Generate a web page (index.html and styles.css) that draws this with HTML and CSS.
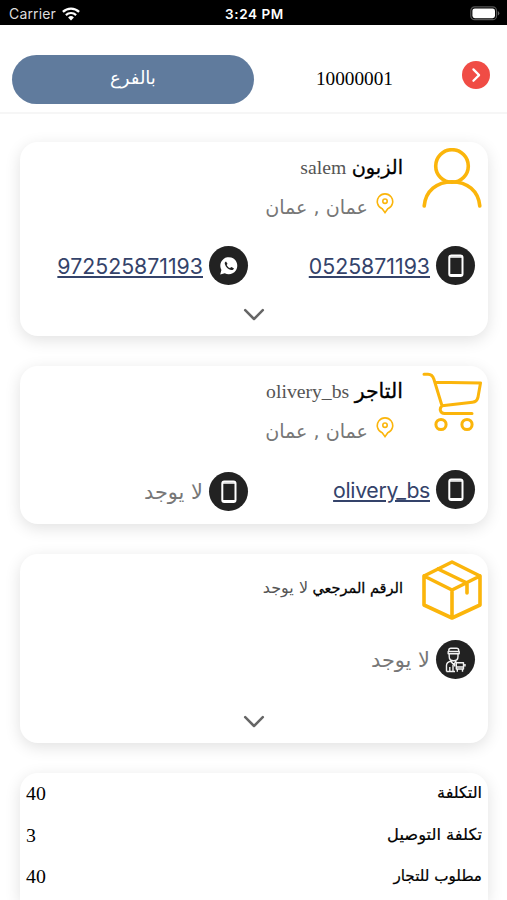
FILE: index.html
```html
<!DOCTYPE html>
<html lang="ar" dir="rtl">
<head>
<meta charset="utf-8">
<meta name="viewport" content="width=device-width, initial-scale=1">
<title>10000001</title>
<link rel="stylesheet" href="styles.css">
</head>
<body>
<svg class="defs" width="0" height="0" aria-hidden="true">
  <symbol id="pin" viewBox="0 0 18 22"><path d="M9 19.6 6.2 15.7a7.7 7.7 0 1 1 5.6 0Z"/><circle cx="9" cy="8.2" r="2.2"/></symbol>
  <symbol id="phone" viewBox="0 0 39 39"><rect x="13.3" y="9.5" width="13.2" height="20.6" rx="2" fill="none" stroke="#fff" stroke-width="2"/><path d="M13.5 11h12.7M13.5 28.6h12.7" stroke="#fff" stroke-width="1.4"/></symbol>
  <symbol id="chevron" viewBox="0 0 22 14"><path d="M2.2 2.2 11 11l8.8-8.8"/></symbol>
</svg>
<div class="status" dir="ltr">
  <div class="carrier"><span>Carrier</span>
    <svg width="18" height="14" viewBox="0 0 18 14" fill="none" stroke="#fff"><path d="M.9 4.9a11.7 11.7 0 0 1 16.2 0" stroke-width="2.3"/><path d="M3.9 8.1a7.3 7.3 0 0 1 10.2 0" stroke-width="2.2"/><path d="M9 13.4 6.1 10.4a4.2 4.2 0 0 1 5.8 0Z" fill="#fff" stroke="none"/></svg>
  </div>
  <div class="clock">3:24 PM</div>
  <svg class="battery" width="30" height="15" viewBox="0 0 30 15"><rect x=".8" y=".9" width="25.7" height="12.8" rx="3.8" fill="none" stroke="#555" stroke-width="1.2"/><rect x="2.4" y="2.4" width="22.6" height="9.8" rx="2.4" fill="#fff"/><path d="M27.8 5v4.6q1.5-.7 1.5-2.3T27.8 5Z" fill="#666"/></svg>
</div>
<header class="topbar">
  <svg class="back" width="28" height="28" viewBox="0 0 28 28"><circle cx="14" cy="14" r="14" fill="#f04c45"/><path d="m11.4 8.4 5.7 5.7-5.7 5.7" fill="none" stroke="#fff" stroke-width="2.2" stroke-linecap="round" stroke-linejoin="round"/></svg>
  <div class="order">10000001</div>
  <div class="pill">بالفرع</div>
</header>
<main>
  <section class="card customer">
    <div class="head">
      <svg class="icon" viewBox="0 0 60 60"><circle cx="30" cy="18" r="16.3"/><path d="M2.2 58C3.5 43 15 33.7 30 33.7S56.5 43 57.8 58"/></svg>
      <div class="info">
        <div class="title"><b>الزبون</b> <span class="latin">salem</span></div>
        <div class="place"><svg class="pin"><use href="#pin"/></svg><span>عمان , عمان</span></div>
      </div>
    </div>
    <div class="contacts">
      <div class="contact"><svg class="disc"><use href="#phone"/></svg><a class="num">0525871193</a></div>
      <div class="contact"><svg class="disc" viewBox="0 0 39 39"><path d="M11.2 28.5l1.2-4.6a8.5 8.5 0 1 1 3.4 3.3Z" fill="#fff"/><path d="M17 15.5c-1.1.4-1.5 1.5-1.1 2.8.8 2.8 3.3 5 6.1 5.7 1.4.3 2.6-.4 2.9-1.8l-2.6-1.3-1.2 1.2c-1.5-.6-2.7-1.7-3.4-3.2l.8-1.2Z" fill="#222"/></svg><a class="num">972525871193</a></div>
    </div>
    <svg class="chev"><use href="#chevron"/></svg>
  </section>
  <section class="card merchant">
    <div class="head">
      <svg class="icon" viewBox="0 0 60 60"><path d="M2 2.3h4c3.4 0 5 1.8 5.9 5L20 33.8l30.5-3.5c3.4-.4 4.7-1.6 5.4-4.6L58.5 11 13.2 10.2M20 33.8c-3 2.7-2 7.6 2.6 7.6H50"/><circle cx="19" cy="52.5" r="5.1"/><circle cx="45" cy="52.5" r="5.1"/></svg>
      <div class="info">
        <div class="title"><b>التاجر</b> <span class="latin">olivery_bs</span></div>
        <div class="place"><svg class="pin"><use href="#pin"/></svg><span>عمان , عمان</span></div>
      </div>
    </div>
    <div class="contacts">
      <div class="contact"><svg class="disc"><use href="#phone"/></svg><a class="num name">olivery_bs</a></div>
      <div class="contact low"><svg class="disc"><use href="#phone"/></svg><span class="none">لا يوجد</span></div>
    </div>
  </section>
  <section class="card reference">
    <div class="head">
      <svg class="icon" viewBox="0 0 60 60"><path d="M30 2 58 16v29L30 58 2 45V16ZM2 16l28 14 28-14M30 30v28M16 9l29 14v10"/></svg>
      <div class="info">
        <div class="title"><b>الرقم المرجعي</b> <span class="arabic">لا يوجد</span></div>
      </div>
    </div>
    <div class="contacts">
      <div class="contact"><svg class="disc" viewBox="0 0 39 39"><g fill="none" stroke="#f2f2f2" stroke-width="1.4" stroke-linejoin="round"><path d="M12.8 11.5V10q0-1.8 2.2-1.8h5.5q2.2 0 2.2 1.8v1.5M12.2 11.5h11v2.2h-11ZM13.2 14v2.5q0 4.3 4.4 4.3t4.4-4.3V14M10.5 31.5V25.5q0-3.5 4.2-4.3l2.9 3.3 2.8-3.3M10.5 31.5h8.5M13.8 27v4.5M17 25v6.5"/><path d="M20.3 22.8h7.2v6.2h-7.2ZM20.3 27h7.2M21.3 29v2.7M26.5 29v2.7M18.6 24v2.5M29 24v2.5"/></g></svg><span class="none">لا يوجد</span></div>
    </div>
    <svg class="chev"><use href="#chevron"/></svg>
  </section>
  <section class="card costs">
    <div class="row"><span class="label">التكلفة</span><span class="value">40</span></div>
    <div class="row"><span class="label wide">تكلفة التوصيل</span><span class="value">3</span></div>
    <div class="row"><span class="label narrow">مطلوب للتجار</span><span class="value">40</span></div>
  </section>
</main>
</body>
</html>
```
FILE: styles.css
```css
* { box-sizing: border-box; }
body { margin: 0; height: 900px; overflow: hidden; background: #fff; color: #000; font-family: "DejaVu Sans", sans-serif; }
.defs { position: absolute; }
svg { flex: none; }
.status { height: 25px; background: #000; color: #fff; display: grid; grid-template-columns: 1fr auto 1fr; align-items: center; padding: 2px 7px 0 9px; font: 14px/20px Inter, sans-serif; }
.carrier { display: flex; align-items: center; gap: 6px; color: #ddd; letter-spacing: .15px; }
.clock { font-weight: 600; font-size: 13.5px; letter-spacing: .6px; }
.battery { justify-self: end; }
.topbar { height: 89px; border-bottom: 2px solid #f6f6f6; display: flex; align-items: flex-start; padding: 30px 17px 0 12px; }
.back { margin-top: 6px; }
.order { margin: 12px 69px 0 0; width: 77px; font: 19.3px/24px "Liberation Serif", serif; }
.pill { margin-right: auto; width: 242px; height: 49px; border-radius: 25px; background: #607b9d; color: #fff; font-size: 18px; line-height: 46px; text-align: center; }
main { padding: 28px 19px 0 20px; }
.card { background: #fff; border-radius: 18px; box-shadow: 0 4px 16px rgba(0,0,0,.12); padding: 6px 6px 0; margin-bottom: 30px; display: flex; flex-direction: column; }
.customer { height: 194px; }
.merchant { height: 158px; }
.reference { height: 189px; }
.head { display: flex; height: 60px; }
.icon { width: 60px; height: 60px; fill: none; stroke: #fbb50b; stroke-width: 3.6; stroke-linecap: round; stroke-linejoin: round; }
.merchant .icon { stroke-width: 3; }
.info { margin-right: 19px; flex: 1; }
.title { height: 40px; line-height: 38px; white-space: nowrap; font-size: 17px; }
.title b { font-weight: 400; font-size: 19.3px; -webkit-text-stroke: .3px #000; }
.merchant .title b { font-size: 20.5px; }
.latin { font-family: "Liberation Serif", serif; color: #555; font-size: 19.7px; }
.arabic { color: #555; font-size: 16px; }
.place { display: flex; align-items: center; height: 36px; color: #777; font-size: 19.1px; line-height: 38px; white-space: nowrap; }
.place span { padding-top: 3px; }
.pin { width: 18px; height: 22px; margin: 0 9px 4px 8px; fill: none; stroke: #fbb50b; stroke-width: 1.6; }
.contacts { display: grid; grid-template-columns: 227px 228px; margin: 38px 7px 0 0; }
.contact { display: flex; align-items: center; gap: 6px; height: 39px; }
.disc { width: 39px; height: 39px; border-radius: 50%; background: #222; }
.num { font: 21.3px/28px Inter, sans-serif; color: #34436a; text-decoration: underline; text-decoration-thickness: 1.5px; text-underline-offset: 2px; }
.name { letter-spacing: -.35px; }
.none { color: #777; font-size: 20.9px; line-height: 30px; }
.low { position: relative; top: 2px; }
.chev { width: 22px; height: 14px; align-self: center; margin-top: 23px; fill: none; stroke: #666; stroke-width: 2.5; stroke-linecap: round; stroke-linejoin: round; }
.reference .contacts { margin-top: 20px; }
.reference .chev { margin-top: 36px; }
.reference .title { line-height: 55px; font-size: 14px; }
.reference .title b { font-size: 14.5px; }
.costs { height: 127px; padding-top: 0; margin-bottom: 0; border-radius: 18px 18px 0 0; }
.row { display: flex; justify-content: space-between; height: 41.5px; line-height: 40px; }
.label { font-size: 16px; -webkit-text-stroke: .2px #000; }
.wide { font-size: 16.3px; }
.narrow { font-size: 15.2px; }
.value { font: 19.8px/40px "Liberation Serif", serif; }
```
